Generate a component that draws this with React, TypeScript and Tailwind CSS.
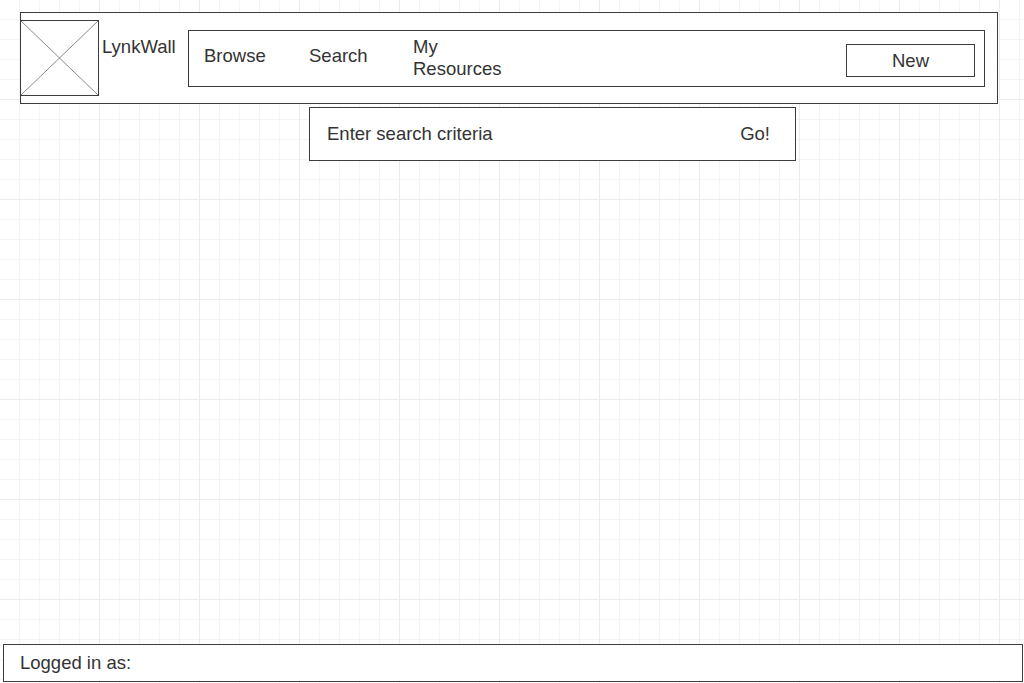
const font = "font-['Liberation_Sans',Arial,sans-serif]";

function ImagePlaceholder() {
  return (
    <div className="relative -ml-px mt-[7px] h-[76px] w-[79px] shrink-0 border border-[#3c3c3c] bg-white">
      <svg className="absolute inset-0 h-full w-full" viewBox="0 0 77 74" preserveAspectRatio="none">
        <line x1="0" y1="0" x2="77" y2="74" stroke="#8a8a8a" strokeWidth="1" />
        <line x1="77" y1="0" x2="0" y2="74" stroke="#8a8a8a" strokeWidth="1" />
      </svg>
    </div>
  );
}

function NavBar() {
  return (
    <nav className="mt-[17px] flex h-[57px] w-[797px] shrink-0 items-start border border-[#3c3c3c] bg-white pl-[15px] pr-[9px]">
      <a className="mt-[14px] w-[105px] leading-[22px]">Browse</a>
      <a className="mt-[14px] w-[104px] leading-[22px]">Search</a>
      <a className="mt-[5px] leading-[22px]">
        My
        <br />
        Resources
      </a>
      <button className="ml-auto mt-[13px] flex h-[33px] w-[129px] items-center justify-center border border-[#3c3c3c] leading-[22px]">
        New
      </button>
    </nav>
  );
}

export default function App() {
  // grid lines sit on 20px / 100px steps, one pixel before the step
  const grid =
    "[background-image:linear-gradient(to_right,transparent_99px,#ebebeb_99px),linear-gradient(to_bottom,transparent_99px,#ebebeb_99px),linear-gradient(to_right,transparent_19px,#f4f4f4_19px),linear-gradient(to_bottom,transparent_19px,#f4f4f4_19px)] [background-size:100px_100px,100px_100px,20px_20px,20px_20px]";

  return (
    <div className={`relative flex h-[683px] w-full flex-col bg-white text-[18.5px] text-[#333] ${font} ${grid}`}>
      <header className="ml-[20px] mt-[12px] flex h-[92px] w-[978px] items-start border border-[#3c3c3c] bg-white">
        <ImagePlaceholder />
        <div className="ml-[3px] mt-[23px] w-[86px] leading-[22px]">LynkWall</div>
        <NavBar />
      </header>

      <div className="ml-[309px] mt-[3px] flex h-[54px] w-[487px] items-center justify-between border border-[#3c3c3c] bg-white pl-[17px] pr-[25px] leading-[22px]">
        <span>Enter search criteria</span>
        <span>Go!</span>
      </div>

      <footer className="ml-[3px] mt-auto mb-[1px] flex h-[38px] w-[1020px] items-center border border-[#3c3c3c] bg-white pl-[16px] leading-[22px]">
        Logged in as:
      </footer>
    </div>
  );
}
